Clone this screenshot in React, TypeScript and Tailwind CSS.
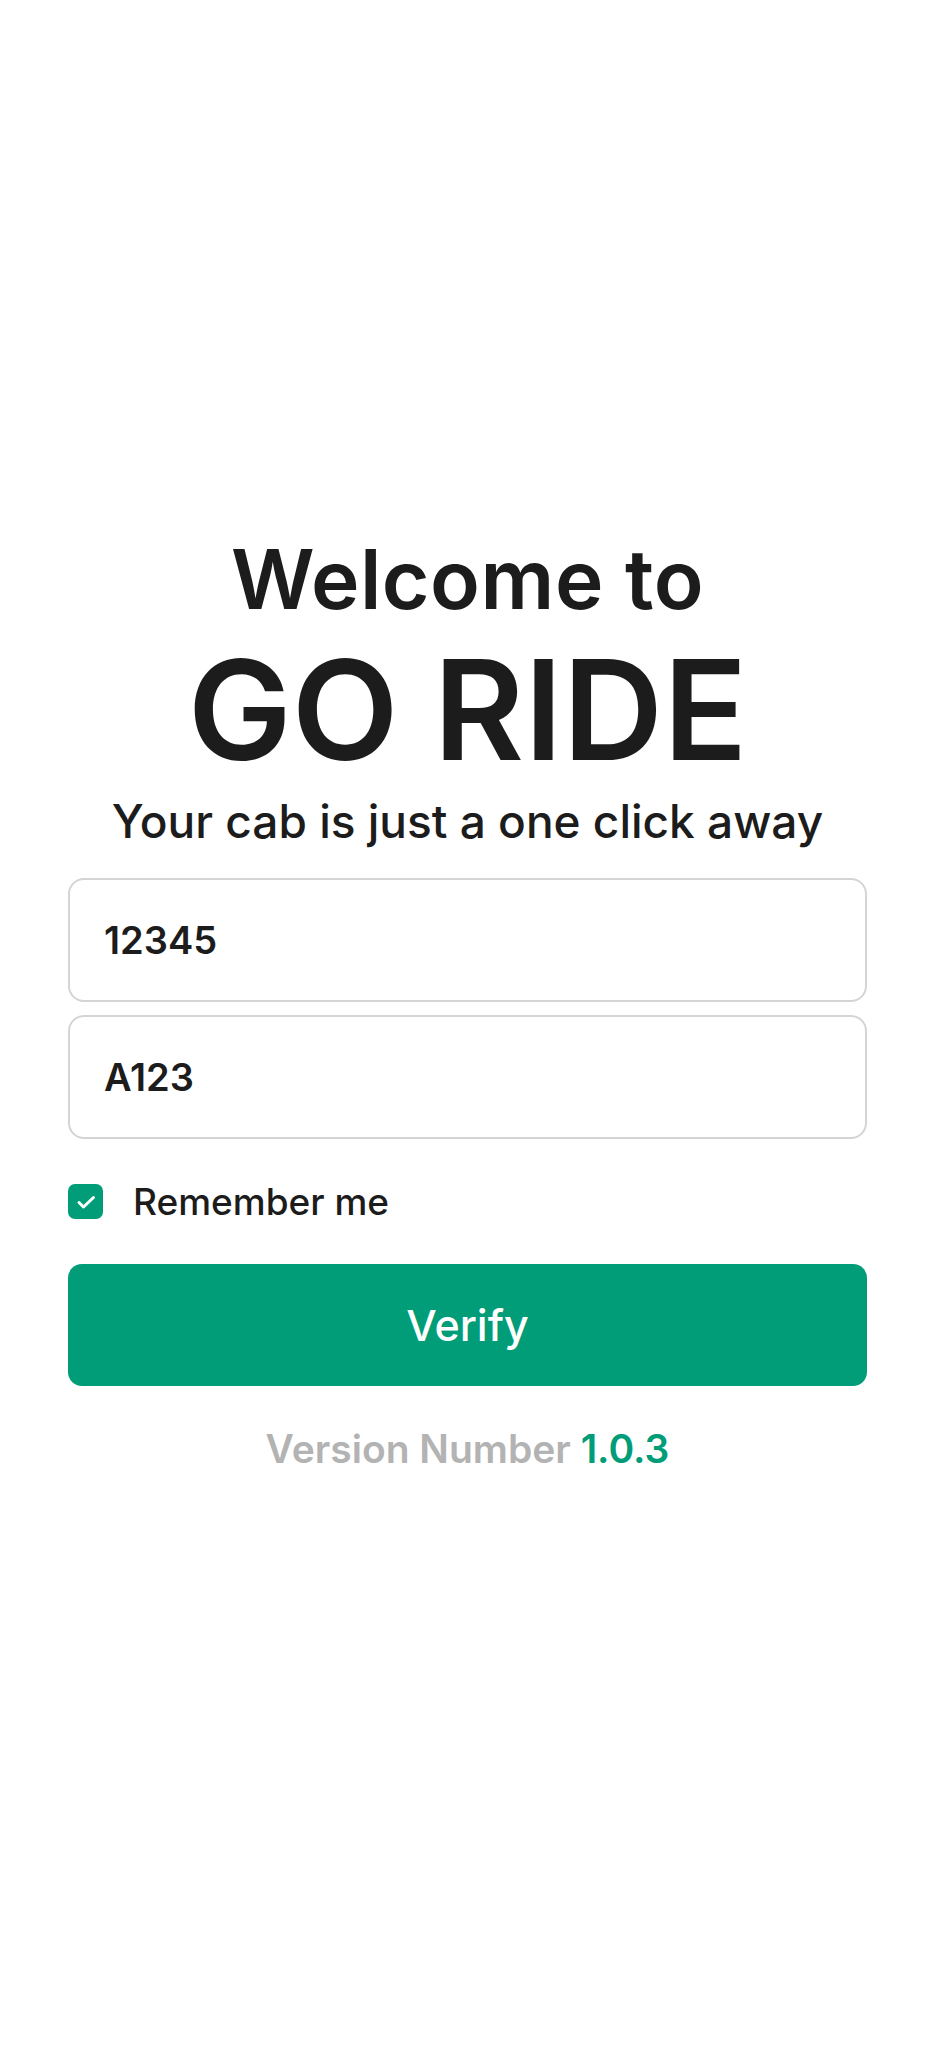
import { useState } from "react";

const App = () => {
  const [remember, setRemember] = useState(true);
  const [driverId, setDriverId] = useState("12345");
  const [vehicle, setVehicle] = useState("A123");

  return (
    <div className="min-h-[2048px] bg-white font-['Inter',sans-serif] text-[#1c1c1c]">
      <div className="flex flex-col items-center px-[68px] pt-[539px]">
        <h1 className="text-[82px] font-semibold leading-none tracking-[0.5px]">Welcome to</h1>
        <h2 className="mt-[19px] text-[139px] font-semibold leading-none">GO RIDE</h2>
        <p className="mt-[19px] text-[46px] font-medium leading-none">Your cab is just a one click away</p>

        <div className="mt-[34px] flex w-full flex-col gap-[13px]">
          <input
            value={driverId}
            onChange={(e) => setDriverId(e.target.value)}
            className="h-[124px] w-full rounded-[16px] border-2 border-[#d4d4d4] px-[34px] text-[38px] font-semibold text-[#1c1c1c] outline-none"
          />
          <input
            value={vehicle}
            onChange={(e) => setVehicle(e.target.value)}
            className="h-[124px] w-full rounded-[16px] border-2 border-[#d4d4d4] px-[34px] text-[38px] font-semibold text-[#1c1c1c] outline-none"
          />
        </div>

        <label className="mt-[44px] flex w-full cursor-pointer items-center gap-[30px]">
          <button
            type="button"
            onClick={() => setRemember(!remember)}
            className="flex h-[35px] w-[35px] items-center justify-center rounded-[7px] bg-[#009d78]"
          >
            {remember && (
              <svg width="24" height="24" viewBox="0 0 24 24" fill="none">
                <path d="M5 12.5l4.5 4.5L19.5 7.5" stroke="white" strokeWidth="3" strokeLinecap="round" strokeLinejoin="round" />
              </svg>
            )}
          </button>
          <span className="text-[37px] font-medium leading-none">Remember me</span>
        </label>

        <button className="mt-[44px] h-[122px] w-full rounded-[14px] bg-[#009d78] text-[43px] font-medium text-white">
          Verify
        </button>

        <p className="mt-[43px] text-[39px] font-semibold leading-none text-[#b3b3b3]">
          Version Number <span className="text-[#009d78]">1.0.3</span>
        </p>
      </div>
    </div>
  );
};

export default App;
